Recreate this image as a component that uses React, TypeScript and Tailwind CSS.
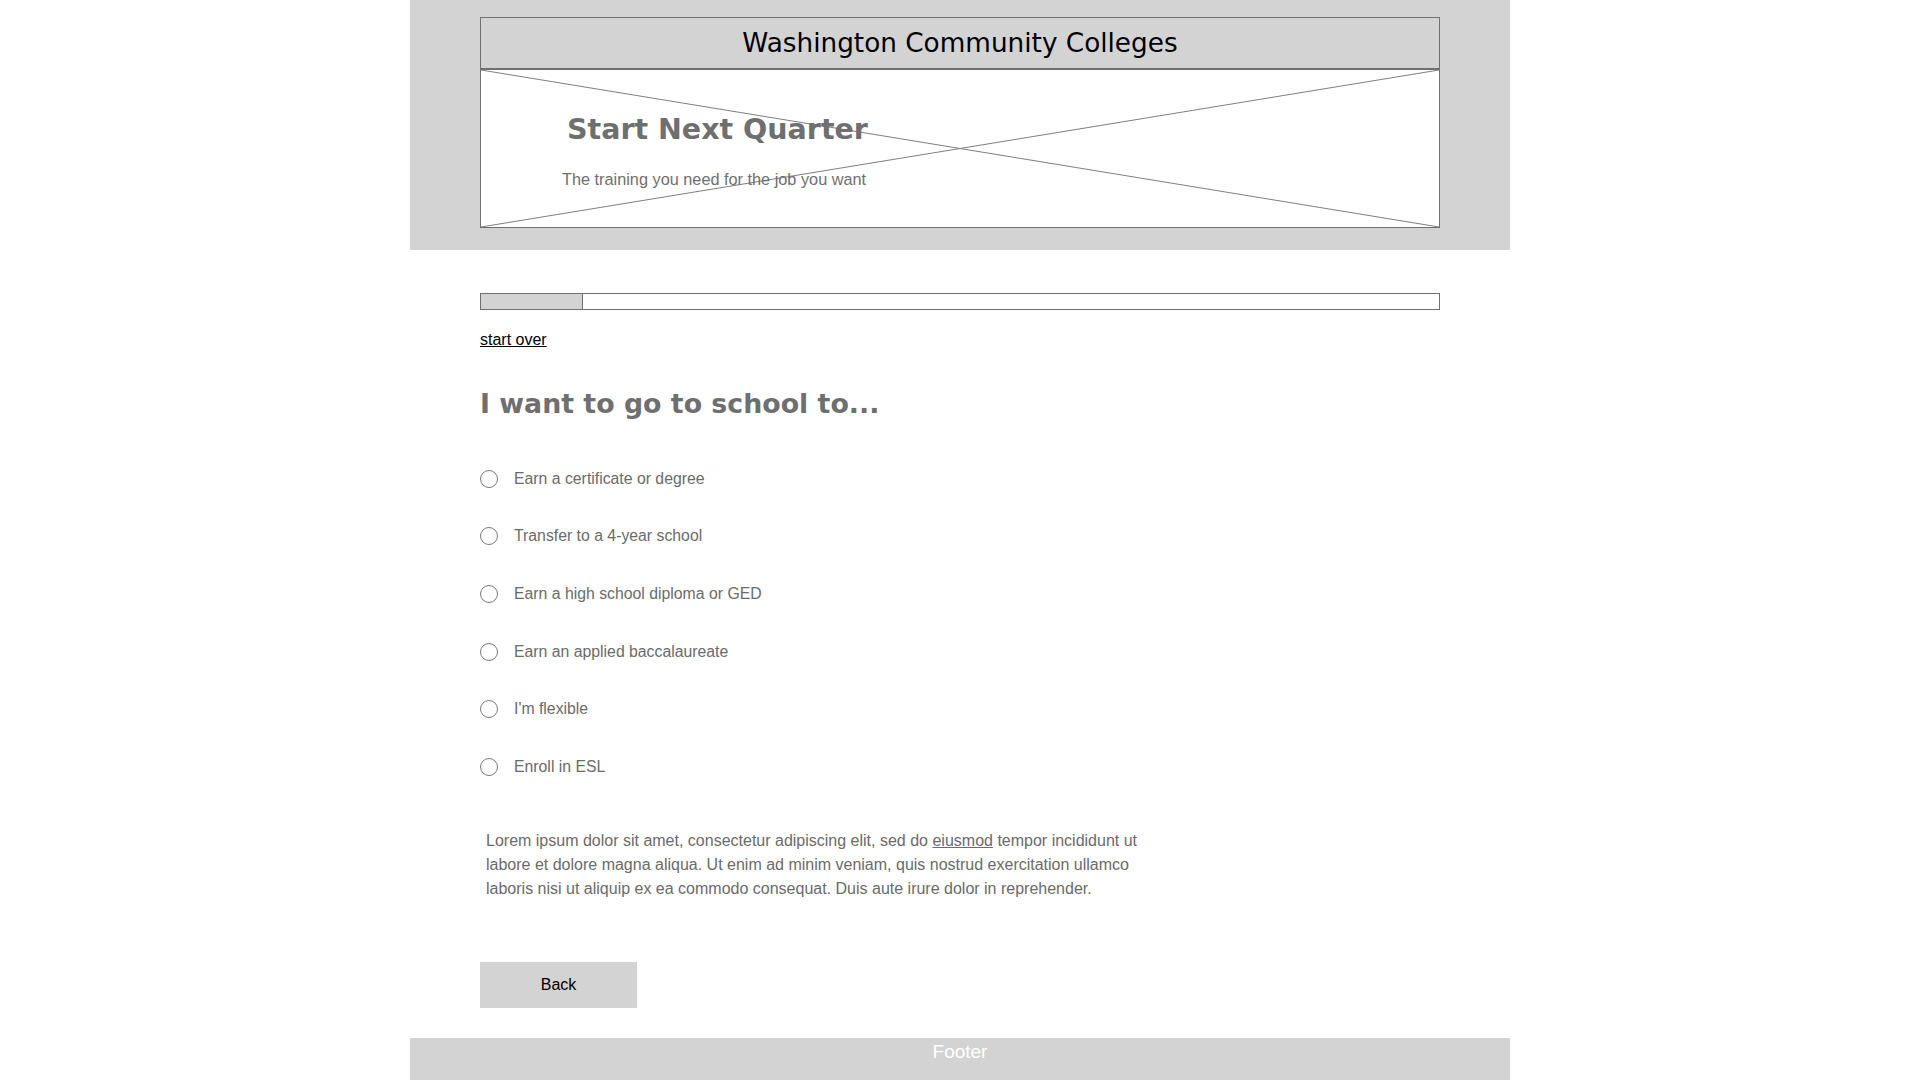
import React from "react";

const options = [
  "Earn a certificate or degree",
  "Transfer to a 4-year school",
  "Earn a high school diploma or GED",
  "Earn an applied baccalaureate",
  "I'm flexible",
  "Enroll in ESL",
];

export default function App() {
  return (
    <div
      className="min-h-screen bg-white flex justify-center"
      style={{ fontFamily: '"Liberation Sans", Arial, sans-serif' }}
    >
      <div className="w-[1100px] flex flex-col">
        {/* Header */}
        <header className="bg-[#d3d3d3] pt-[17px] pb-[22px] px-[70px]">
          <div className="border border-[#707070]">
            <div className="h-[52px] bg-[#d3d3d3] border-b-2 border-[#707070] flex items-center justify-center">
              <span
                className="text-[26.3px] text-black leading-none"
                style={{ fontFamily: '"DejaVu Sans", Verdana, sans-serif' }}
              >
                Washington Community Colleges
              </span>
            </div>
            <div className="relative h-[157px] bg-white">
              <svg
                className="absolute inset-0 w-full h-full"
                viewBox="0 0 100 100"
                preserveAspectRatio="none"
              >
                <line x1="0" y1="0" x2="100" y2="100" stroke="#7f7f7f" strokeWidth="1" vectorEffect="non-scaling-stroke" />
                <line x1="0" y1="100" x2="100" y2="0" stroke="#7f7f7f" strokeWidth="1" vectorEffect="non-scaling-stroke" />
              </svg>
              <div className="relative pt-[43px] pl-[81px]">
                <h2
                  className="text-[28.5px] leading-[34px] font-bold text-[#6f6f6f] pl-[5px]"
                  style={{ fontFamily: '"DejaVu Sans", Verdana, sans-serif' }}
                >
                  Start Next Quarter
                </h2>
                <p className="mt-[22px] text-[16.3px] leading-[20px] text-[#6f6f6f]">
                  The training you need for the job you want
                </p>
              </div>
            </div>
          </div>
        </header>

        {/* Main */}
        <main className="px-[70px] pt-[43px] flex flex-col">
          <div className="h-[17px] border border-[#707070] flex bg-white">
            <div className="w-[102px] bg-[#d3d3d3] border-r border-[#707070]" />
          </div>

          <div className="mt-[20px] leading-[20px] text-[16px]">
            <a href="#" className="text-black underline">
              start over
            </a>
          </div>

          <h1
            className="mt-[37px] text-[26.8px] leading-[34px] font-bold text-[#6f6f6f]"
            style={{ fontFamily: '"DejaVu Sans", Verdana, sans-serif' }}
          >
            I want to go to school to...
          </h1>

          <div className="mt-[29px] flex flex-col">
            {options.map((o) => (
              <label key={o} className="h-[57.6px] flex items-center gap-[16px] cursor-pointer">
                <span className="w-[18px] h-[18px] rounded-full border border-[#7a7a7a] bg-white shrink-0" />
                <span className="text-[15.8px] leading-[20px] text-[#6b6b6b]">{o}</span>
              </label>
            ))}
          </div>

          <p className="mt-[33px] ml-[6px] w-[672px] text-[16px] leading-[24px] text-[#6b6b6b]">
            Lorem ipsum dolor sit amet, consectetur adipiscing elit, sed do{" "}
            <span className="underline">eiusmod</span> tempor incididunt ut labore et dolore magna
            aliqua. Ut enim ad minim veniam, quis nostrud exercitation ullamco laboris nisi ut
            aliquip ex ea commodo consequat. Duis aute irure dolor in reprehender.
          </p>

          <button className="mt-[61px] w-[157px] h-[46px] bg-[#d3d3d3] text-black text-[16px] flex items-center justify-center">
            Back
          </button>
        </main>

        {/* Footer */}
        <footer className="mt-[30px] h-[42px] bg-[#d3d3d3]">
          <div className="h-[30px] flex items-center justify-center text-white text-[19px]">
            Footer
          </div>
        </footer>
      </div>
    </div>
  );
}
